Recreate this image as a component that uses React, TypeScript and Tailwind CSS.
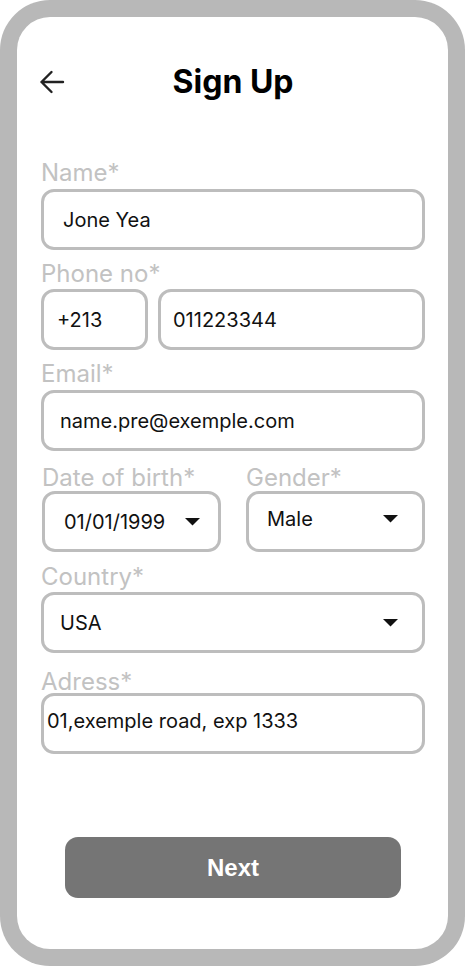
import { ReactNode } from 'react';

// Caixa de campo com borda cinza
function Box({ children, className = '' }: { children: ReactNode; className?: string }) {
  return (
    <div
      className={`flex items-center h-[61px] border-[3px] border-[#bdbdbd] rounded-[13px] text-[20px] text-[#111] ${className}`}
    >
      {children}
    </div>
  );
}

function Label({ children, className = '' }: { children: ReactNode; className?: string }) {
  return <div className={`text-[24px] leading-[29px] text-[#c2c2c2] ${className}`}>{children}</div>;
}

function Caret() {
  return (
    <svg width="15" height="8" viewBox="0 0 15 8" className="shrink-0">
      <polygon points="0,0 15,0 7.5,7.5" fill="#111" />
    </svg>
  );
}

export default function App() {
  return (
    <div className="w-[465px] h-[966px] bg-white font-['Inter',sans-serif]">
      <div className="w-full h-full bg-[#b8b8b8] rounded-[50px] p-[17px]">
        <div className="flex flex-col h-full bg-white rounded-[33px] pl-[24px] pr-[23px]">
          {/* Cabeçalho */}
          <div className="relative flex items-center justify-center h-[40px] mt-[45px]">
            <svg
              width="26"
              height="26"
              viewBox="0 0 26 26"
              className="absolute left-[-2px] top-[7px]"
              fill="none"
              stroke="#222"
              strokeWidth="2.4"
              strokeLinecap="round"
              strokeLinejoin="round"
            >
              <path d="M24 13H2.5M12.5 3L2.5 13l10 10" />
            </svg>
            <h1 className="text-[32px] leading-[40px] font-bold text-black">Sign Up</h1>
          </div>

          {/* Nome */}
          <Label className="mt-[56px]">Name*</Label>
          <Box className="mt-[2px] pl-[19px]">Jone Yea</Box>

          {/* Telefone */}
          <Label className="mt-[9px]">Phone no*</Label>
          <div className="flex gap-[10px] mt-[1px]">
            <Box className="w-[107px] pl-[13px]">+213</Box>
            <Box className="flex-1 pl-[12px]">011223344</Box>
          </div>

          {/* Email */}
          <Label className="mt-[9px]">Email*</Label>
          <Box className="mt-[2px] pl-[16px]">name.pre@exemple.com</Box>

          {/* Data de nascimento e gênero */}
          <div className="flex gap-[25px] mt-[12px]">
            <div className="w-[180px] pl-[1px]">
              <Label>Date of birth*</Label>
              <Box className="mt-[-1px] pl-[19px] pr-[18px] justify-between">
                <span>01/01/1999</span>
                <Caret />
              </Box>
            </div>
            <div className="flex-1">
              <Label>Gender*</Label>
              <Box className="mt-[-1px] pl-[18px] pr-[24px] justify-between pb-[6px]">
                <span>Male</span>
                <Caret />
              </Box>
            </div>
          </div>

          {/* País */}
          <Label className="mt-[10px]">Country*</Label>
          <Box className="mt-[1px] pl-[16px] pr-[24px] justify-between">
            <span>USA</span>
            <Caret />
          </Box>

          {/* Endereço */}
          <Label className="mt-[14px]">Adress*</Label>
          <Box className="mt-[-3px] pl-[3px] pb-[6px]">01,exemple road, exp 1333</Box>

          {/* Botão */}
          <button className="mt-auto mb-[51px] mx-[24px] h-[61px] rounded-[13px] bg-[#757575] text-white text-[24px] font-bold font-['Liberation_Sans',sans-serif]">
            Next
          </button>
        </div>
      </div>
    </div>
  );
}
